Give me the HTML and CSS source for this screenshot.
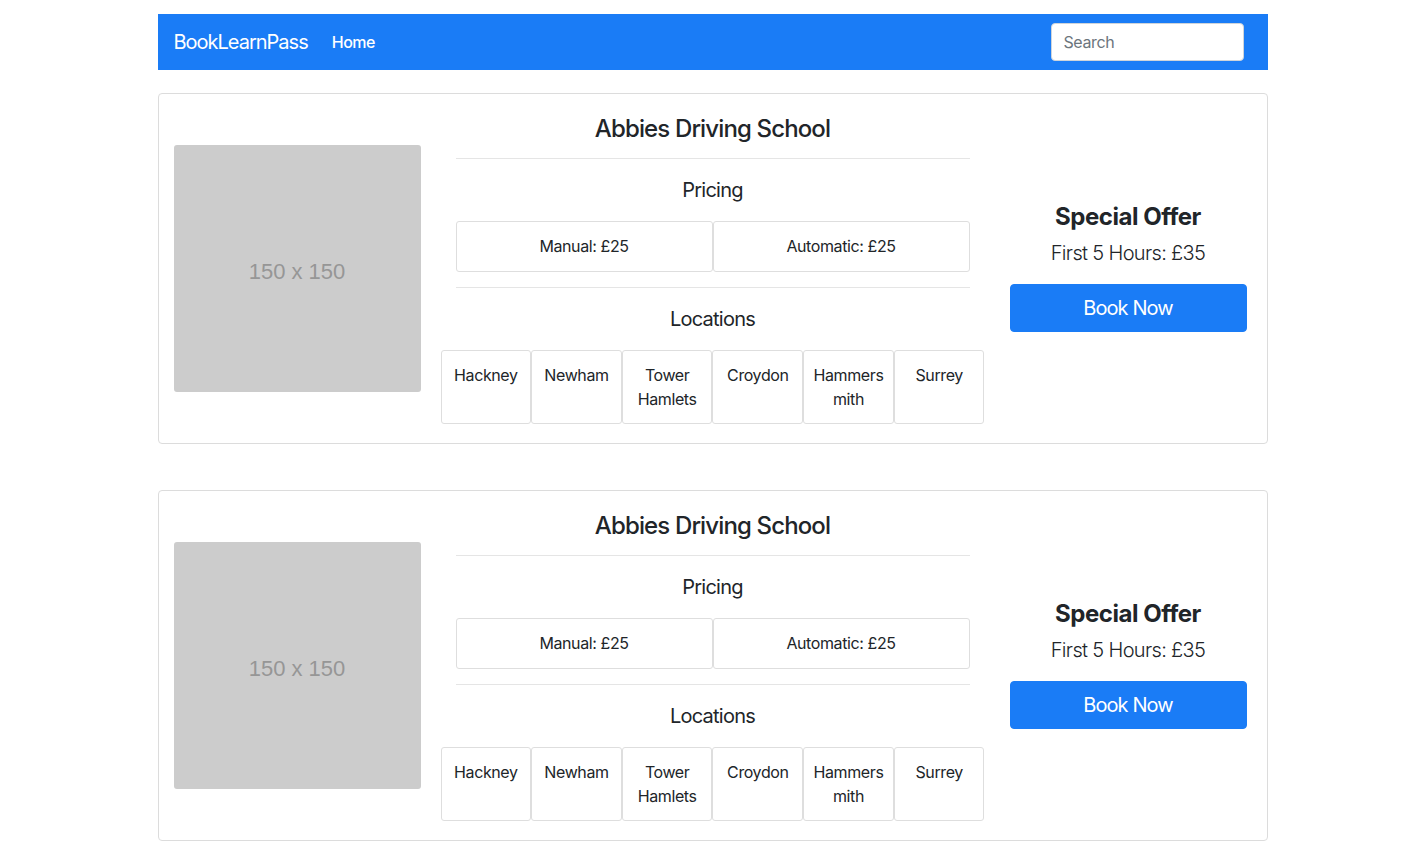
FILE: index.html
```html
<!DOCTYPE html>
<html lang="en">
<head>
<meta charset="utf-8">
<title>BookLearnPass</title>
<link rel="stylesheet" href="styles.css">
</head>
<body>
<div class="page">
  <nav class="navbar">
    <a class="brand" href="#">BookLearnPass</a>
    <a class="nav-link" href="#">Home</a>
    <input class="search" type="text" placeholder="Search">
  </nav>

  <div class="card">
    <div class="col-img"><div class="placeholder">150 x 150</div></div>
    <div class="col-main">
      <h3 class="school">Abbies Driving School</h3>
      <hr class="rule">
      <h5 class="section">Pricing</h5>
      <div class="prices">
        <div class="price">Manual: £25</div>
        <div class="price">Automatic: £25</div>
      </div>
      <hr class="rule">
      <h5 class="section">Locations</h5>
      <div class="locations">
        <div class="loc">Hackney</div>
        <div class="loc">Newham</div>
        <div class="loc">Tower Hamlets</div>
        <div class="loc">Croydon</div>
        <div class="loc">Hammersmith</div>
        <div class="loc">Surrey</div>
      </div>
    </div>
    <div class="col-offer">
      <h4 class="offer-title">Special Offer</h4>
      <p class="offer-text">First 5 Hours: £35</p>
      <a class="btn" href="#">Book Now</a>
    </div>
  </div>

  <div class="card">
    <div class="col-img"><div class="placeholder">150 x 150</div></div>
    <div class="col-main">
      <h3 class="school">Abbies Driving School</h3>
      <hr class="rule">
      <h5 class="section">Pricing</h5>
      <div class="prices">
        <div class="price">Manual: £25</div>
        <div class="price">Automatic: £25</div>
      </div>
      <hr class="rule">
      <h5 class="section">Locations</h5>
      <div class="locations">
        <div class="loc">Hackney</div>
        <div class="loc">Newham</div>
        <div class="loc">Tower Hamlets</div>
        <div class="loc">Croydon</div>
        <div class="loc">Hammersmith</div>
        <div class="loc">Surrey</div>
      </div>
    </div>
    <div class="col-offer">
      <h4 class="offer-title">Special Offer</h4>
      <p class="offer-text">First 5 Hours: £35</p>
      <a class="btn" href="#">Book Now</a>
    </div>
  </div>
</div>
</body>
</html>
```

FILE: styles.css
```css
* { box-sizing: border-box; }
html, body { margin: 0; padding: 0; background: #fff; }
body {
  font-family: Inter, "Noto Sans", "Liberation Sans", sans-serif;
  font-size: 16px;
  line-height: 1.5;
  color: #212529;
  letter-spacing: -0.025em;
}
.page {
  width: 1110px;
  margin: 0 auto;
  padding-top: 14px;
}
.navbar {
  height: 56px;
  background: #1a7cf6;
  display: flex;
  align-items: center;
  padding: 0 24px 0 16px;
}
.brand {
  color: #fff;
  text-decoration: none;
  font-size: 20px;
  line-height: 30px;
  letter-spacing: -0.05em;
  margin-right: 24px;
}
.nav-link {
  color: #fff;
  text-decoration: none;
  font-size: 16px;
  font-weight: 500;
  letter-spacing: -0.03em;
}
.search {
  margin-left: auto;
  width: 193px;
  height: 38px;
  border: 1px solid #ced4da;
  border-radius: 4px;
  padding: 6px 12px;
  font-family: inherit;
  font-size: 16px;
  letter-spacing: -0.025em;
  color: #495057;
  background: #fff;
}
.search::placeholder { color: #6c757d; }

.card {
  margin-top: 23px;
  border: 1px solid #dcdcdc;
  border-radius: 4px;
  display: grid;
  grid-template-columns: 277px 554px 277px;
}
.card + .card { margin-top: 46px; }

.col-img {
  padding: 0 15px;
  display: flex;
  align-items: center;
}
.placeholder {
  width: 247px;
  height: 247px;
  background: #cccccc;
  border-radius: 3px;
  display: flex;
  align-items: center;
  justify-content: center;
  padding-top: 5px;
  font-family: "Liberation Sans", Arial, sans-serif;
  font-size: 22px;
  letter-spacing: 0;
  color: #969696;
}

.col-main {
  padding: 20px 20px 19px;
  text-align: center;
}
.school {
  margin: 0;
  font-size: 24px;
  line-height: 29px;
  font-weight: 500;
  letter-spacing: -0.036em;
}
.rule {
  margin: 15px 0 16px;
  border: 0;
  border-top: 1px solid #e5e5e5;
}
.section {
  margin: 0 0 16px;
  font-size: 20px;
  line-height: 30px;
  font-weight: 400;
  letter-spacing: -0.038em;
}
.prices {
  display: flex;
}
.price {
  flex: 1;
  border: 1px solid #dedede;
  border-radius: 3px;
  padding: 12px 12px 13px;
  line-height: 24px;
}
.locations {
  display: grid;
  grid-template-columns: repeat(6, 1fr);
  margin: 0 -15px 0 -15px;
}
.loc {
  border: 1px solid #dedede;
  border-radius: 3px;
  padding: 12px 9px;
  line-height: 24px;
  overflow-wrap: anywhere;
}

.col-offer {
  padding: 0 20px 4px;
  display: flex;
  flex-direction: column;
  justify-content: center;
  text-align: center;
}
.offer-title {
  margin: 0 0 7px;
  font-size: 24px;
  line-height: 29px;
  font-weight: 700;
  letter-spacing: -0.02em;
}
.offer-text {
  margin: 0 0 16px;
  font-size: 20px;
  line-height: 30px;
  font-weight: 300;
  letter-spacing: -0.033em;
}
.btn {
  display: block;
  background: #1a7cf6;
  color: #fff;
  text-decoration: none;
  font-size: 20px;
  line-height: 30px;
  letter-spacing: -0.045em;
  padding: 8px 16px;
  border: 1px solid #1a7cf6;
  border-radius: 4px;
}
```
